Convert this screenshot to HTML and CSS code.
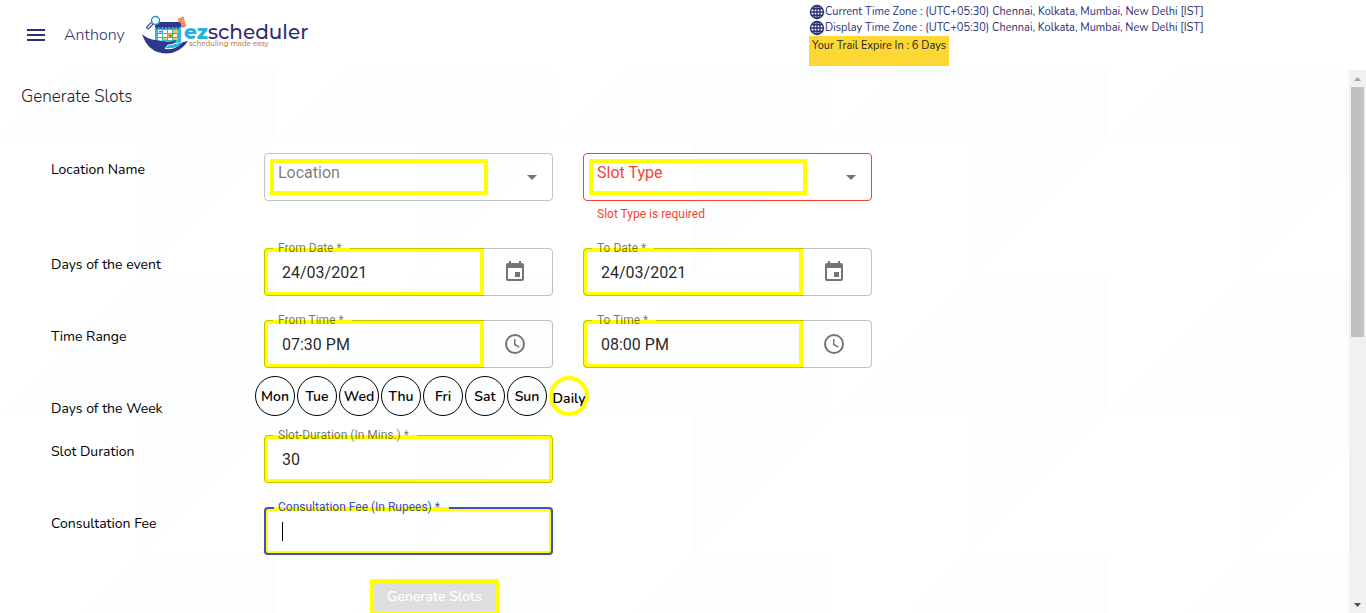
FILE: index.html
```html
<!DOCTYPE html>
<html lang="en">
<head>
<meta charset="utf-8">
<meta name="viewport" content="width=device-width, initial-scale=1">
<title>Generate Slots</title>
<link rel="stylesheet" href="styles.css">
</head>
<body>
<header class="topbar">
  <div class="brand">
    <button class="menu-btn" type="button" aria-label="Menu">
      <svg width="24" height="24" viewBox="0 0 24 24"><path fill="currentColor" d="M3 18h18v-2H3v2zm0-5h18v-2H3v2zm0-7v2h18V6H3z"/></svg>
    </button>
    <span class="user">Anthony</span>
    <svg class="logo" width="170" height="40" viewBox="2 1 170 40" role="img" aria-label="ezscheduler, scheduling made easy">
      <path fill="#f2703f" d="M37.500 5l6-2.500L46 12l-4 2z"/>
      <path stroke="#fff" stroke-width="1" stroke-dasharray="1 1" d="M39.500 5l4 7M42 4l3 7"/>
      <path fill="#35b6dd" d="M15 12h26v16.500q-13 1-26-1z"/>
      <path fill="#2b3a8e" d="M15 13v-2.500Q15 8 17.500 8h21Q41 8 41 10.500V13z"/>
      <path stroke="#2b3a8e" stroke-width="2" stroke-dasharray="2 1.500" d="M16 13.500h24"/>
      <path fill="#fff" d="M18 16h4v3h-4zM23 16h4v3h-4zM28 16h4v3h-4zM18 20h4v3h-4zM23 20h4v3h-4zM33 20h4v3h-4zM18 24h4v3h-4zM28 24h4v2h-4z"/>
      <path fill="#f5c52c" d="M33 16h5v3h-5zM28 20h5v3h-5zM23 24h4v2h-4zM33 24h5v2h-5z"/>
      <path fill="#e0442e" d="M19 17h3v1.500h-3z"/>
      <path stroke="#2b3a8e" fill="none" d="M29 21l2 1.500 3-3"/>
      <path stroke="#2b3a8e" stroke-width="3.500" stroke-linecap="round" d="M11.500 10L8 13.500"/>
      <path stroke="#fff" stroke-width="1.200" stroke-linecap="round" d="M11.500 10L8 13.500"/>
      <circle cx="15.500" cy="6.500" r="4" fill="#fff" stroke="#2595b5" stroke-width="1.500"/>
      <path fill="#2b3a8e" d="M2 20q5 5 13 6 6 .5 12 2 4 .5 7-1.500 2-.5 2 .5-1 3-8 3.500-4 3-3 4.500 10 1 14-4 3-3.500 9-4-8 12.500-22 12.500Q8 39 2 20z"/>
      <path fill="#35b6dd" d="M25 34q1-3 8-3.500 5-1 8-2.500 0 7-16 6z"/>
      <text class="logo-ez" x="44" y="25">ez</text>
      <text class="logo-name" x="68" y="25">scheduler</text>
      <text class="logo-tag" x="49" y="32">scheduling made easy</text>
    </svg>
  </div>
  <div class="zones">
    <p class="zone">
      <svg width="16" height="16" viewBox="0 0 16 16" fill="none" stroke="currentColor" stroke-width="1.400"><circle cx="8" cy="8" r="6.500"/><ellipse cx="8" cy="8" rx="3" ry="6.500"/><path d="M8 1.500v13M1.500 8h13M2.500 4.800h11M2.500 11.200h11"/></svg>
      <span>Current Time Zone : (UTC+05:30) Chennai, Kolkata, Mumbai, New Delhi [IST]</span>
    </p>
    <p class="zone">
      <svg width="16" height="16" viewBox="0 0 16 16" fill="none" stroke="currentColor" stroke-width="1.400"><circle cx="8" cy="8" r="6.500"/><ellipse cx="8" cy="8" rx="3" ry="6.500"/><path d="M8 1.500v13M1.500 8h13M2.500 4.800h11M2.500 11.200h11"/></svg>
      <span>Display Time Zone : (UTC+05:30) Chennai, Kolkata, Mumbai, New Delhi [IST]</span>
    </p>
    <p class="trial">Your Trail Expire In : 6 Days</p>
  </div>
</header>

<div class="viewport">
  <main class="page">
    <h1 class="title">Generate Slots</h1>
    <form class="form">
      <div class="row row-tall">
        <span class="row-label">Location Name</span>
        <div class="cell">
          <div class="field">
            <select class="select" aria-label="Location"><option>Location</option></select>
            <svg class="caret" width="24" height="24" viewBox="0 0 24 24"><path fill="currentColor" d="M7 10l5 5 5-5z"/></svg>
            <fieldset class="outline" aria-hidden="true"></fieldset>
          </div>
        </div>
        <div class="cell">
          <div class="field field-error">
            <select class="select" aria-label="Slot Type" aria-describedby="slot-error"><option>Slot Type</option></select>
            <svg class="caret" width="24" height="24" viewBox="0 0 24 24"><path fill="currentColor" d="M7 10l5 5 5-5z"/></svg>
            <fieldset class="outline" aria-hidden="true"></fieldset>
          </div>
          <p class="helper" id="slot-error">Slot Type is required</p>
        </div>
      </div>

      <div class="row">
        <span class="row-label">Days of the event</span>
        <div class="field">
          <label class="float" for="from-date">From Date *</label>
          <input class="input" id="from-date" type="text" value="24/03/2021">
          <button class="icon-btn" type="button" aria-label="Choose from date"><svg width="24" height="24" viewBox="0 0 24 24"><path fill="currentColor" d="M17 12h-5v5h5v-5zM16 1v2H8V1H6v2H5c-1.110 0-1.990.9-1.990 2L3 19c0 1.100.89 2 2 2h14c1.100 0 2-.9 2-2V5c0-1.100-.9-2-2-2h-1V1h-2zm3 18H5V8h14v11z"/></svg></button>
          <fieldset class="outline notched" aria-hidden="true"><legend>From Date *</legend></fieldset>
        </div>
        <div class="field">
          <label class="float" for="to-date">To Date *</label>
          <input class="input" id="to-date" type="text" value="24/03/2021">
          <button class="icon-btn" type="button" aria-label="Choose to date"><svg width="24" height="24" viewBox="0 0 24 24"><path fill="currentColor" d="M17 12h-5v5h5v-5zM16 1v2H8V1H6v2H5c-1.110 0-1.990.9-1.990 2L3 19c0 1.100.89 2 2 2h14c1.100 0 2-.9 2-2V5c0-1.100-.9-2-2-2h-1V1h-2zm3 18H5V8h14v11z"/></svg></button>
          <fieldset class="outline notched" aria-hidden="true"><legend>To Date *</legend></fieldset>
        </div>
      </div>

      <div class="row row-short">
        <span class="row-label">Time Range</span>
        <div class="field">
          <label class="float" for="from-time">From Time *</label>
          <input class="input" id="from-time" type="text" value="07:30 PM">
          <button class="icon-btn" type="button" aria-label="Choose from time"><svg width="24" height="24" viewBox="0 0 24 24" fill="none" stroke="currentColor"><circle cx="12" cy="12" r="9" stroke-width="2"/><path stroke-width="1.500" d="M11.750 7v5.500l4.500 2.700"/></svg></button>
          <fieldset class="outline notched" aria-hidden="true"><legend>From Time *</legend></fieldset>
        </div>
        <div class="field">
          <label class="float" for="to-time">To Time *</label>
          <input class="input" id="to-time" type="text" value="08:00 PM">
          <button class="icon-btn" type="button" aria-label="Choose to time"><svg width="24" height="24" viewBox="0 0 24 24" fill="none" stroke="currentColor"><circle cx="12" cy="12" r="9" stroke-width="2"/><path stroke-width="1.500" d="M11.750 7v5.500l4.500 2.700"/></svg></button>
          <fieldset class="outline notched" aria-hidden="true"><legend>To Time *</legend></fieldset>
        </div>
      </div>

      <div class="row row-week">
        <span class="row-label">Days of the Week</span>
        <div class="days">
          <button class="day" type="button">Mon</button>
          <button class="day" type="button">Tue</button>
          <button class="day" type="button">Wed</button>
          <button class="day" type="button">Thu</button>
          <button class="day" type="button">Fri</button>
          <button class="day" type="button">Sat</button>
          <button class="day" type="button">Sun</button>
          <button class="day day-active" type="button">Daily</button>
        </div>
      </div>

      <div class="row">
        <span class="row-label">Slot Duration</span>
        <div class="field">
          <label class="float" for="duration">Slot-Duration (In Mins.) *</label>
          <input class="input input-wide" id="duration" type="text" value="30">
          <fieldset class="outline notched" aria-hidden="true"><legend>Slot-Duration (In Mins.) *</legend></fieldset>
        </div>
      </div>

      <div class="row">
        <span class="row-label">Consultation Fee</span>
        <div class="field field-focus">
          <label class="float" for="fee">Consultation Fee (In Rupees) *</label>
          <input class="input input-wide" id="fee" type="text">
          <span class="cursor" aria-hidden="true"></span>
          <fieldset class="outline notched" aria-hidden="true"><legend>Consultation Fee (In Rupees) *</legend></fieldset>
        </div>
      </div>

      <div class="row">
        <div class="actions"><button class="submit" type="submit" disabled>Generate Slots</button></div>
      </div>
    </form>
  </main>
  <div class="scrollbar" aria-hidden="true">
    <svg width="17" height="17" viewBox="0 0 17 17"><path fill="#a3a3a3" d="M5 11h7L8.500 7z"/></svg>
    <div class="thumb"></div>
    <svg class="down" width="17" height="17" viewBox="0 0 17 17"><path fill="#505050" d="M5 7h7l-3.500 4z"/></svg>
  </div>
</div>
</body>
</html>
```
FILE: styles.css
```css
* { box-sizing: border-box; }

body {
  margin: 0;
  height: 100vh;
  display: flex;
  flex-direction: column;
  overflow: hidden;
  background: #fff;
  color: #212121;
  font-family: Nunito, "Open Sans", "Noto Sans", sans-serif;
  font-size: 14px;
}

p, h1 { margin: 0; font-weight: 400; }

button, input, select { font: inherit; margin: 0; }

button { cursor: pointer; }

/* Header */
.topbar {
  flex: none;
  display: grid;
  grid-template-columns: 809fr 557fr;
  height: 70px;
  color: #2b3075;
}

.brand {
  display: flex;
  align-items: center;
  padding-left: 24px;
}

.menu-btn {
  display: flex;
  padding: 0;
  border: 0;
  background: none;
  color: #2b3075;
}

.user {
  width: 78px;
  margin-left: 16px;
  font-size: 16px;
  font-weight: 300;
  white-space: nowrap;
}

.logo { overflow: visible; }

.logo text { font-family: Montserrat, "Open Sans", sans-serif; }
.logo .logo-ez { font-size: 20px; font-weight: 800; fill: #27b2de; }
.logo .logo-name { font-size: 20px; font-weight: 500; fill: #2b3075; }
.logo .logo-tag { font-size: 7px; font-weight: 500; fill: #c9803f; }

.zones {
  display: flex;
  flex-direction: column;
  align-items: flex-start;
  padding-top: 4px;
  font-size: 11px;
  font-weight: 300;
  line-height: 16px;
  white-space: nowrap;
}

.zone { display: flex; }

.trial {
  height: 30px;
  padding: 2px 3px;
  background: #fdd835;
  color: #212121;
}

/* Scrolling area */
.viewport {
  flex: 1;
  display: flex;
  min-height: 0;
}

.page {
  flex: 1;
  min-width: 0;
  overflow: hidden;
  background-color: #fff;
  background-image: url("data:image/svg+xml,%3Csvg xmlns='http://www.w3.org/2000/svg' width='277' height='277' viewBox='0 0 2 2'%3E%3Cpath fill='%23fcfdff' d='M0 1L1 0H2V1zM1 1H2L1 2z'/%3E%3C/svg%3E");
  background-position: 0 -70px;
}

.title {
  padding: 15px 21px 0;
  font-size: 17px;
  font-weight: 300;
  line-height: 24px;
}

.scrollbar {
  flex: none;
  display: flex;
  flex-direction: column;
  width: 17px;
  background: #f1f1f1;
}

.thumb {
  height: 46%;
  margin: 0 2px;
  background: #c1c1c1;
}

.down { margin-top: auto; }

/* Form */
.form { padding: 44px 30px 0 51px; }

.row {
  display: grid;
  grid-template-columns: minmax(0, 183fr) minmax(0, 289fr) minmax(0, 289fr) minmax(0, 417fr);
  column-gap: 30px;
  align-items: start;
  min-height: 72px;
}

.row-tall { min-height: 95px; }
.row-short { min-height: 56px; }
.row-week { min-height: 59px; }

.row-label {
  padding-top: 8px;
  line-height: 18px;
  color: #000;
}

.row-week .row-label { padding-top: 24px; }

.field {
  position: relative;
  display: flex;
  height: 48px;
  color: rgba(0, 0, 0, .54);
  font-family: Roboto, sans-serif;
  font-size: 16px;
}

.input {
  flex: 1;
  min-width: 0;
  padding: 0 14px;
  border: 4px solid #ff0;
  border-radius: 4px 0 0 4px;
  outline: 0;
  background: none;
  color: rgba(0, 0, 0, .87);
}

.input-wide { border-radius: 4px; }

.icon-btn {
  width: 69px;
  padding: 0 8px 0 0;
  border: 0;
  background: none;
  color: rgba(0, 0, 0, .54);
}

.icon-btn svg { display: block; margin: 0 auto; }

.outline {
  position: absolute;
  inset: 0;
  margin: 0;
  padding: 0 8px;
  border: 1px solid rgba(0, 0, 0, .23);
  border-radius: 4px;
  pointer-events: none;
}

.notched { top: -6px; }

.notched legend {
  height: 12px;
  padding: 0 8px 0 5px;
  font-size: 12px;
  line-height: 12px;
  color: transparent;
}

.float {
  position: absolute;
  top: -8px;
  left: 14px;
  font-size: 12px;
  line-height: 16px;
  white-space: nowrap;
}

.select {
  flex: 1;
  min-width: 0;
  margin: 6px 0 6px 6px;
  padding: 0 4px 10px;
  border: 4px solid #ff0;
  border-radius: 0;
  outline: 0;
  appearance: none;
  background: none;
  color: rgba(0, 0, 0, .54);
}

.caret {
  margin: 12px 9px 12px 32px;
}

.field-error .select { color: #f44336; }
.field-error .outline { border-color: #f44336; }

.helper {
  padding: 5px 14px 0;
  color: #f44336;
  font-family: Roboto, sans-serif;
  font-size: 12px;
  line-height: 16px;
}

.field-focus .float { color: #3f51b5; }
.field-focus .outline { border: 2px solid #3f51b5; }
.field-focus .notched { top: -5px; }

.cursor {
  position: absolute;
  top: 15px;
  left: 18px;
  width: 1px;
  height: 19px;
  background: #000;
}

/* Weekdays */
.days {
  display: flex;
  gap: 2px;
  margin-left: -9px;
}

.day {
  flex: none;
  display: flex;
  align-items: center;
  justify-content: center;
  width: 40px;
  height: 40px;
  padding: 0;
  border: 1px solid #000;
  border-radius: 50%;
  background: none;
  color: #000;
  font-weight: 600;
}

.day-active {
  padding-top: 4px;
  border: 4px solid #ff0;
}

.actions {
  grid-column: 2;
  padding-left: 106px;
}

.submit {
  height: 36px;
  padding: 0 13px;
  border: 4px solid #ff0;
  border-radius: 2px;
  background: rgba(0, 0, 0, .12);
  color: #fff;
  font-size: 14px;
  font-weight: 600;
  line-height: 26px;
  white-space: nowrap;
}
```
